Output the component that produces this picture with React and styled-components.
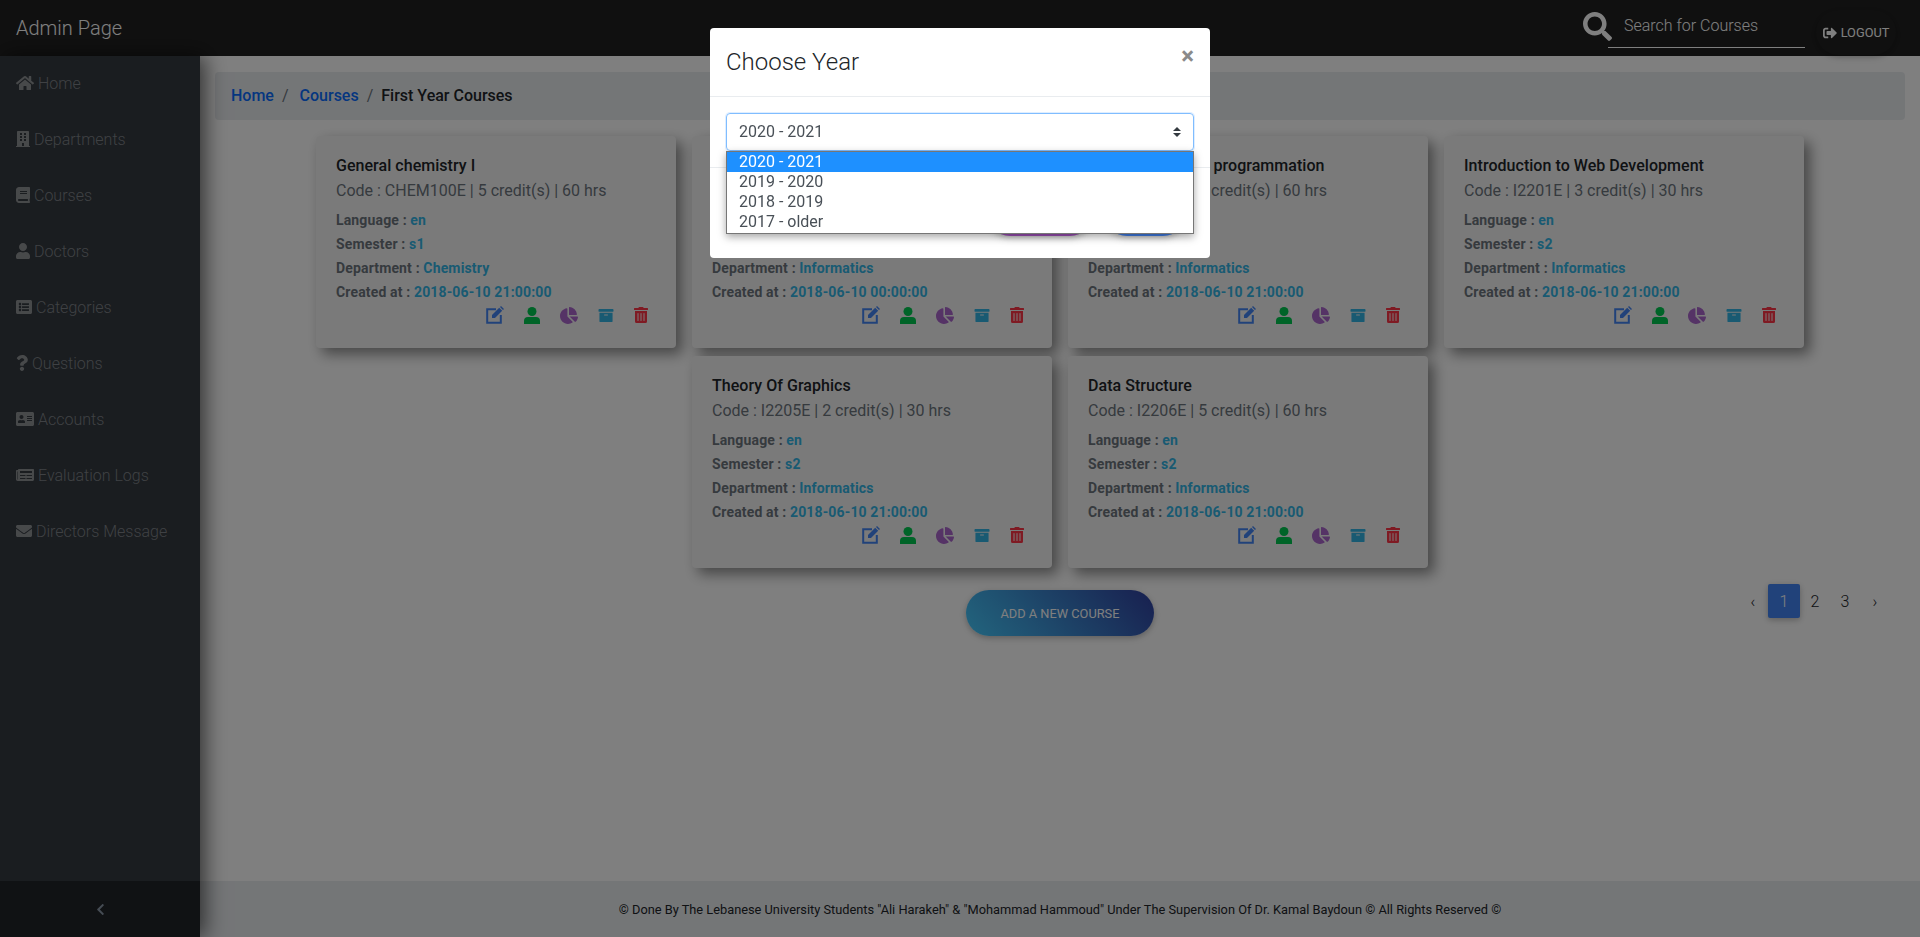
import React from 'react'
import styled, { createGlobalStyle } from 'styled-components'
import {
  FaHome, FaBuilding, FaBook, FaUser, FaListAlt, FaQuestion, FaAddressCard, FaNewspaper, FaEnvelope,
  FaSearch, FaSignOutAlt, FaChartPie, FaArchive, FaTrashAlt, FaChevronLeft,
} from 'react-icons/fa'

const Global = createGlobalStyle`
  * { box-sizing: border-box; }
  html, body { margin: 0; height: 100%; }
  body {
    font-family: Roboto, "Liberation Sans", sans-serif;
    font-size: 16px;
    color: #212529;
    background: #fff;
    overflow: hidden;
  }
`

const Page = styled.div`
  height: 937px;
  display: flex;
  flex-direction: column;
`

const TopBar = styled.header`
  height: 56px;
  flex: none;
  background: #212121;
  display: flex;
  align-items: flex-start;
  padding: 0 16px;
  color: #fff;
`

const Brand = styled.div`
  font-size: 20px;
  font-weight: 300;
  line-height: 56px;
  flex: 1;
`

const SearchBox = styled.div`
  display: flex;
  align-items: flex-start;
  margin-right: 11px;
  svg { font-size: 29px; margin-top: 12px; margin-right: -4px; position: relative; z-index: 1; }
`

const SearchField = styled.div`
  width: 197px;
  height: 48px;
  border-bottom: 1px solid #fff;
  padding: 15px 0 0 16px;
  font-weight: 300;
  line-height: 22px;
`

const LogoutButton = styled.div`
  width: 80px;
  height: 45px;
  margin-top: 10px;
  margin-right: 8px;
  display: flex;
  align-items: center;
  justify-content: center;
  gap: 4px;
  font-size: 12.8px;
  border-radius: 23px;
  box-shadow: 0 2px 5px rgba(0, 0, 0, .16), 0 2px 10px rgba(0, 0, 0, .12);
  svg { font-size: 14px; }
`

const Body = styled.div`
  flex: 1;
  display: flex;
  min-height: 0;
`

const Sidebar = styled.aside`
  width: 200px;
  flex: none;
  background: #343a40;
  display: flex;
  flex-direction: column;
  box-shadow: 5px 0 20px rgba(0, 0, 0, .6);
  position: relative;
  z-index: 2;
`

const NavList = styled.nav`
  flex: 1;
`

const NavItem = styled.a`
  height: 56px;
  display: flex;
  align-items: center;
  gap: 4px;
  padding: 0 0 2px 16px;
  font-weight: 300;
  color: #7f8388;
  svg { height: 16px; width: ${p => p.$iconWidth}px; color: #8f9295; }
`

const Toggle = styled.div`
  height: 56px;
  background: #212529;
  color: #8b98a8;
  display: flex;
  align-items: center;
  justify-content: center;
  font-size: 13px;
`

const Main = styled.main`
  flex: 1;
  min-width: 0;
  display: flex;
  flex-direction: column;
`

const Content = styled.div`
  flex: 1;
  padding: 16px 15px 0;
`

const Breadcrumb = styled.div`
  height: 48px;
  background: #e9ecef;
  border-radius: 4px;
  display: flex;
  align-items: center;
  padding: 0 16px 2px;
  font-weight: 500;
`

const Crumb = styled.a`
  color: #0a6cff;
`

const Sep = styled.span`
  color: #6c757d;
  font-weight: 400;
  padding: 0 8px;
  margin-right: ${p => p.$wide ? '3px' : '0'};
`

const CardGrid = styled.div`
  display: flex;
  flex-wrap: wrap;
  justify-content: center;
  gap: 8px 16px;
  margin-top: 16px;
`

const Card = styled.article`
  width: 360px;
  height: 212px;
  background: #f5f5f5;
  border-radius: 4px;
  padding: 20px;
  box-shadow: 6px 6px 14px rgba(0, 0, 0, .45);
`

const CardTitle = styled.h5`
  margin: 0;
  font-size: 16px;
  font-weight: 500;
  line-height: 19px;
  letter-spacing: .04px;
`

const CardSub = styled.p`
  margin: 6px 0 8px;
  line-height: 19px;
  color: #6c757d;
`

const InfoLine = styled.div`
  font-size: 14px;
  font-weight: 700;
  line-height: 24px;
  letter-spacing: .15px;
  color: #6c757d;
  b { font-weight: 700; color: #33b5e5; }
`

const Actions = styled.div`
  display: flex;
  justify-content: flex-end;
  align-items: center;
  gap: 19px;
  margin-top: 2px;
  padding-right: 6px;
`

const ActionIcon = styled.span`
  width: 18px;
  height: 18px;
  display: flex;
  align-items: center;
  justify-content: center;
  color: ${p => p.$color};
  svg { width: 18px; height: ${p => p.$size || '16px'}; }
  &:last-child { margin-left: -2px; }
`

const BottomRow = styled.div`
  display: grid;
  grid-template-columns: 1fr auto 1fr;
  align-items: start;
  margin-top: 16px;
`

const AddButton = styled.div`
  grid-column: 2;
  width: 188px;
  height: 46px;
  margin-top: 6px;
  border-radius: 23px;
  background: linear-gradient(50deg, #45cafc, #303f9f);
  color: #fff;
  font-size: 12.8px;
  display: flex;
  align-items: center;
  justify-content: center;
  box-shadow: 0 2px 5px rgba(0, 0, 0, .16), 0 2px 10px rgba(0, 0, 0, .12);
`

const Pager = styled.div`
  grid-column: 3;
  justify-self: end;
  display: flex;
  align-items: center;
  height: 34px;
  font-weight: 300;
  padding-right: 15px;
`

const PageLink = styled.span`
  width: ${p => p.$active ? '32px' : '30px'};
  height: 34px;
  display: flex;
  align-items: center;
  justify-content: center;
  border-radius: 2px;
  color: ${p => p.$active ? '#fff' : '#212529'};
  background: ${p => p.$active ? '#4285f4' : 'transparent'};
  box-shadow: ${p => p.$active ? '0 2px 5px rgba(0, 0, 0, .16), 0 2px 10px rgba(0, 0, 0, .12)' : 'none'};
`

const Footer = styled.footer`
  height: 56px;
  flex: none;
  background: #e9ecef;
  display: flex;
  align-items: center;
  justify-content: center;
  font-size: 12.8px;
  color: #212529;
`

const Backdrop = styled.div`
  position: fixed;
  inset: 0;
  background: rgba(0, 0, 0, .5);
  z-index: 10;
`

const Modal = styled.div`
  position: fixed;
  z-index: 11;
  top: 28px;
  left: 710px;
  width: 500px;
  height: 230px;
  background: #fff;
  border-radius: 4px;
  display: flex;
  flex-direction: column;
`

const ModalHeader = styled.div`
  height: 69px;
  flex: none;
  border-bottom: 1px solid #e9ecef;
  display: flex;
  align-items: center;
  justify-content: space-between;
  padding: 0 16px;
`

const ModalTitle = styled.h4`
  margin: 0;
  font-size: 24px;
  font-weight: 300;
  color: #212529;
`

const CloseMark = styled.span`
  font-size: 24px;
  font-weight: 700;
  line-height: 1;
  color: #8a8a8a;
  margin-top: -12px;
`

const ModalBody = styled.div`
  height: 71px;
  flex: none;
  padding: 16px;
  position: relative;
  border-bottom: 1px solid #e9ecef;
`

const SelectBox = styled.div`
  height: 38px;
  border: 1px solid #80bdff;
  border-radius: 4px;
  box-shadow: 0 0 0 1px rgba(128, 189, 255, .25);
  display: flex;
  align-items: center;
  justify-content: space-between;
  padding: 0 12px 2px;
  color: #495057;
  svg { width: 8px; height: 10px; margin-top: 2px; }
`

const Options = styled.div`
  position: absolute;
  top: 54px;
  left: 16px;
  right: 16px;
  padding-bottom: 1px;
  border: 1px solid #767676;
  background: #fff;
  box-shadow: 0 3px 8px rgba(0, 0, 0, .35);
  z-index: 3;
`

const Option = styled.div`
  height: 20px;
  line-height: 20px;
  padding-left: 12px;
  color: ${p => p.$selected ? '#fff' : '#495057'};
  background: ${p => p.$selected ? '#1e90ff' : 'transparent'};
`

const ModalFooter = styled.div`
  flex: 1;
  display: flex;
  justify-content: flex-end;
  gap: 11px;
  padding: 22px 24px 0 0;
`

const ModalButton = styled.div`
  height: 46px;
  width: ${p => p.$w};
  border-radius: 23px;
  background: ${p => p.$bg};
  box-shadow: 0 2px 5px rgba(0, 0, 0, .16), 0 2px 10px rgba(0, 0, 0, .12);
`

const EditIcon = () => (
  <svg viewBox="0 0 18 18" fill="currentColor">
    <path d="M10 3.2H1.2v13.6h13.6V9" fill="none" stroke="currentColor" strokeWidth="2" />
    <path d="M6 9 13.2 1.8l3 3L9 12H6zM14 1l1-1 3 3-1 1z" />
  </svg>
)

const UserIcon = () => (
  <svg viewBox="0 0 16 17" fill="currentColor">
    <circle cx="8" cy="4.5" r="4.5" />
    <path d="M0 17v-3a4 4 0 0 1 4-4h8a4 4 0 0 1 4 4v3z" />
  </svg>
)

const courses = [
  { title: 'General chemistry I', code: 'CHEM100E', credits: 5, hrs: 60, sem: 's1', dep: 'Chemistry', date: '2018-06-10 21:00:00' },
  { title: 'Introduction to Programming', code: 'I2202E', credits: 5, hrs: 60, sem: 's1', dep: 'Informatics', date: '2018-06-10 00:00:00' },
  { title: 'Object Oriented - programmation', code: 'I2203E', credits: 5, hrs: 60, sem: 's2', dep: 'Informatics', date: '2018-06-10 21:00:00' },
  { title: 'Introduction to Web Development', code: 'I2201E', credits: 3, hrs: 30, sem: 's2', dep: 'Informatics', date: '2018-06-10 21:00:00' },
  { title: 'Theory Of Graphics', code: 'I2205E', credits: 2, hrs: 30, sem: 's2', dep: 'Informatics', date: '2018-06-10 21:00:00' },
  { title: 'Data Structure', code: 'I2206E', credits: 5, hrs: 60, sem: 's2', dep: 'Informatics', date: '2018-06-10 21:00:00' },
]

const navItems = [
  [FaHome, 'Home', 18], [FaBuilding, 'Departments', 14], [FaBook, 'Courses', 14], [FaUser, 'Doctors', 14],
  [FaListAlt, 'Categories', 16], [FaQuestion, 'Questions', 12], [FaAddressCard, 'Accounts', 18],
  [FaNewspaper, 'Evaluation Logs', 18], [FaEnvelope, 'Directors Message', 16],
]

const years = ['2020 - 2021', '2019 - 2020', '2018 - 2019', '2017 - older']

const CourseCard = ({ course }) => (
  <Card>
    <CardTitle>{course.title}</CardTitle>
    <CardSub>Code : {course.code} | {course.credits} credit(s) | {course.hrs} hrs</CardSub>
    <InfoLine>Language : <b>en</b></InfoLine>
    <InfoLine>Semester : <b>{course.sem}</b></InfoLine>
    <InfoLine>Department : <b>{course.dep}</b></InfoLine>
    <InfoLine>Created at : <b>{course.date}</b></InfoLine>
    <Actions>
      <ActionIcon $color="#4285f4" $size="18px"><EditIcon /></ActionIcon>
      <ActionIcon $color="#00c851" $size="17px"><UserIcon /></ActionIcon>
      <ActionIcon $color="#aa66cc" $size="17px"><FaChartPie /></ActionIcon>
      <ActionIcon $color="#33b5e5" $size="15px"><FaArchive /></ActionIcon>
      <ActionIcon $color="#ff3547"><FaTrashAlt /></ActionIcon>
    </Actions>
  </Card>
)

export default function App() {
  return (
    <Page>
      <Global />
      <TopBar>
        <Brand>Admin Page</Brand>
        <SearchBox>
          <FaSearch />
          <SearchField>Search for Courses</SearchField>
        </SearchBox>
        <LogoutButton><FaSignOutAlt />LOGOUT</LogoutButton>
      </TopBar>
      <Body>
        <Sidebar>
          <NavList>
            {navItems.map(([Icon, label, width]) => (
              <NavItem key={label} $iconWidth={width}><Icon />{label}</NavItem>
            ))}
          </NavList>
          <Toggle><FaChevronLeft /></Toggle>
        </Sidebar>
        <Main>
          <Content>
            <Breadcrumb>
              <Crumb>Home</Crumb><Sep $wide>/</Sep>
              <Crumb>Courses</Crumb><Sep>/</Sep>
              First Year Courses
            </Breadcrumb>
            <CardGrid>
              {courses.map(c => <CourseCard key={c.title} course={c} />)}
            </CardGrid>
            <BottomRow>
              <AddButton>ADD A NEW COURSE</AddButton>
              <Pager>
                <PageLink>‹</PageLink>
                <PageLink $active>1</PageLink>
                <PageLink>2</PageLink>
                <PageLink>3</PageLink>
                <PageLink>›</PageLink>
              </Pager>
            </BottomRow>
          </Content>
          <Footer>© Done By The Lebanese University Students "Ali Harakeh" &amp; "Mohammad Hammoud" Under The Supervision Of Dr. Kamal Baydoun © All Rights Reserved ©</Footer>
        </Main>
      </Body>
      <Backdrop />
      <Modal>
        <ModalHeader>
          <ModalTitle>Choose Year</ModalTitle>
          <CloseMark>×</CloseMark>
        </ModalHeader>
        <ModalBody>
          <SelectBox>
            {years[0]}
            <svg viewBox="0 0 8 10"><path d="M4 0 8 4H0zM4 10 0 6h8z" fill="#343a40" /></svg>
          </SelectBox>
          <Options>
            {years.map((y, i) => <Option key={y} $selected={i === 0}>{y}</Option>)}
          </Options>
        </ModalBody>
        <ModalFooter>
          <ModalButton $w="106px" $bg="#9b4fb5" />
          <ModalButton $w="82px" $bg="#3f7de6" />
        </ModalFooter>
      </Modal>
    </Page>
  )
}
